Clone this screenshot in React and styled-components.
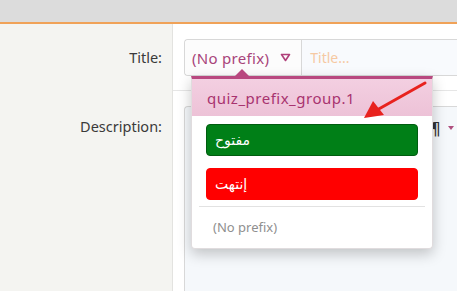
import styled, { createGlobalStyle } from 'styled-components';

const GlobalStyle = createGlobalStyle`
  html, body {
    margin: 0;
    padding: 0;
    height: 100%;
    overflow: hidden;
    background: #fff;
  }
  body {
    font-family: "Noto Sans", "DejaVu Sans", sans-serif;
  }
  #root {
    height: 100%;
  }
`;

const Page = styled.div`
  height: 100%;
  display: flex;
  flex-direction: column;
`;

const TopBar = styled.div`
  height: 22px;
  flex: none;
  background: #dcdcdc;
  border-bottom: 2px solid #f0a258;
`;

const Form = styled.div`
  flex: 1;
  display: grid;
  grid-template-columns: 173px 1fr;
  grid-template-rows: auto 1fr;
  position: relative;
`;

const Label = styled.div`
  background: #f4f4f1;
  border-right: 1px solid #e3e3e0;
  text-align: right;
  padding: ${({ $top }) => $top}px 10px 0 0;
  font-size: 14.5px;
  color: #3a3a3a;
`;

const Field = styled.div`
  padding: ${({ $top }) => $top}px 0 ${({ $bottom }) => $bottom}px 11px;
  border-bottom: ${({ $line }) => ($line ? '1px solid #e6e6e6' : 'none')};
  position: relative;
  min-width: 0;
`;

const InputGroup = styled.div`
  position: relative;
  display: flex;
  height: 37px;
  border: 1px solid #d8d8d8;
  border-right: none;
  border-radius: 4px 0 0 4px;
  box-sizing: border-box;
`;

const PrefixButton = styled.div`
  display: flex;
  align-items: center;
  gap: 11px;
  padding: 0 10px 0 7px;
  background: #fcfcfc;
  border-right: 1px solid #d8d8d8;
  color: #a8447a;
  font-size: 15px;
  letter-spacing: 0.3px;
  border-radius: 4px 0 0 4px;
`;

const TitleInput = styled.div`
  flex: 1;
  display: flex;
  align-items: center;
  padding-left: 8px;
  background: #f8fafd;
  color: #f6c9a3;
  font-size: 14px;
`;

const Menu = styled.div`
  position: absolute;
  left: 6px;
  top: calc(100% + 1px);
  width: 240px;
  background: #fff;
  border: 1px solid #e0dcde;
  border-top: 3px solid #b8487f;
  border-radius: 0 0 4px 4px;
  box-shadow: 0 5px 14px rgba(0, 0, 0, 0.22);
  z-index: 5;

  &::before {
    content: '';
    position: absolute;
    left: 43px;
    top: -10px;
    border-left: 7px solid transparent;
    border-right: 7px solid transparent;
    border-bottom: 7px solid #b8487f;
  }
`;

const GroupTitle = styled.div`
  height: 37px;
  display: flex;
  align-items: center;
  padding-left: 15px;
  background: linear-gradient(#f3cfe1, #edc2d7);
  color: #a8336f;
  font-size: 15px;
  letter-spacing: 0.5px;
`;

const Options = styled.div`
  padding: 8px 14px 0;
  display: flex;
  flex-direction: column;
  gap: 12px;
`;

const Tag = styled.div`
  height: 32px;
  box-sizing: border-box;
  display: flex;
  align-items: center;
  padding-left: 8px;
  border-radius: 4px;
  background: ${({ $bg }) => $bg};
  border: 1px solid ${({ $edge }) => $edge};
  color: #fff;
  font-size: 14px;
  font-family: "DejaVu Sans", sans-serif;
`;

const Divider = styled.div`
  height: 1px;
  background: #e2e2e2;
  margin: 6px 7px 0;
`;

const EmptyOption = styled.div`
  padding: 11px 21px 12px;
  color: #8f8f8f;
  font-size: 13px;
  line-height: 18px;
`;

const Editor = styled.div`
  height: 100%;
  box-sizing: border-box;
  border: 1px solid #d8d8d8;
  border-right: none;
  border-bottom: none;
  border-radius: 4px 0 0 0;
  background: #f5f8fb;
`;

const Toolbar = styled.div`
  display: flex;
  justify-content: flex-end;
  align-items: center;
  height: 42px;
  padding-right: 3px;
`;

const ToolButton = styled.div`
  display: flex;
  align-items: center;
  gap: 7px;
  color: #333;
  font-size: 18px;
  font-family: "DejaVu Sans", sans-serif;
`;

const Caret = styled.span`
  width: 0;
  height: 0;
  border-left: 3px solid transparent;
  border-right: 3px solid transparent;
  border-top: 4px solid #b0507f;
`;

const Arrow = styled.svg`
  position: absolute;
  left: 355px;
  top: 52px;
  z-index: 10;
  pointer-events: none;
`;

const TriangleIcon = () => (
  <svg width="11" height="9" viewBox="0 0 11 9">
    <path d="M1.5 1.5 H9.5 L5.5 7.5 Z" fill="none" stroke="#b0407a" strokeWidth="1.6" strokeLinejoin="round" />
  </svg>
);

export default function App() {
  return (
    <Page>
      <GlobalStyle />
      <TopBar />
      <Form>
        <Label $top={23}>Title:</Label>
        <Field $top={15} $bottom={14} $line>
          <InputGroup>
            <PrefixButton>
              (No prefix) <TriangleIcon />
            </PrefixButton>
            <TitleInput>Title...</TitleInput>
            <Menu>
              <GroupTitle>quiz_prefix_group.1</GroupTitle>
              <Options>
                <Tag $bg="#007f17" $edge="#005c10">مفتوح</Tag>
                <Tag $bg="#ff0000" $edge="#ff0000">إنتهت</Tag>
              </Options>
              <Divider />
              <EmptyOption>(No prefix)</EmptyOption>
            </Menu>
          </InputGroup>
        </Field>
        <Label $top={25}>Description:</Label>
        <Field $top={15} $bottom={0}>
          <Editor>
            <Toolbar>
              <ToolButton>
                ¶ <Caret />
              </ToolButton>
            </Toolbar>
          </Editor>
        </Field>
        <Arrow width="80" height="50" viewBox="0 0 80 50">
          <line x1="70" y1="7" x2="22" y2="34" stroke="#e8221e" strokeWidth="3" strokeLinecap="round" />
          <path d="M9 42 L18 25 L29 39 Z" fill="#e8221e" />
        </Arrow>
      </Form>
    </Page>
  );
}
